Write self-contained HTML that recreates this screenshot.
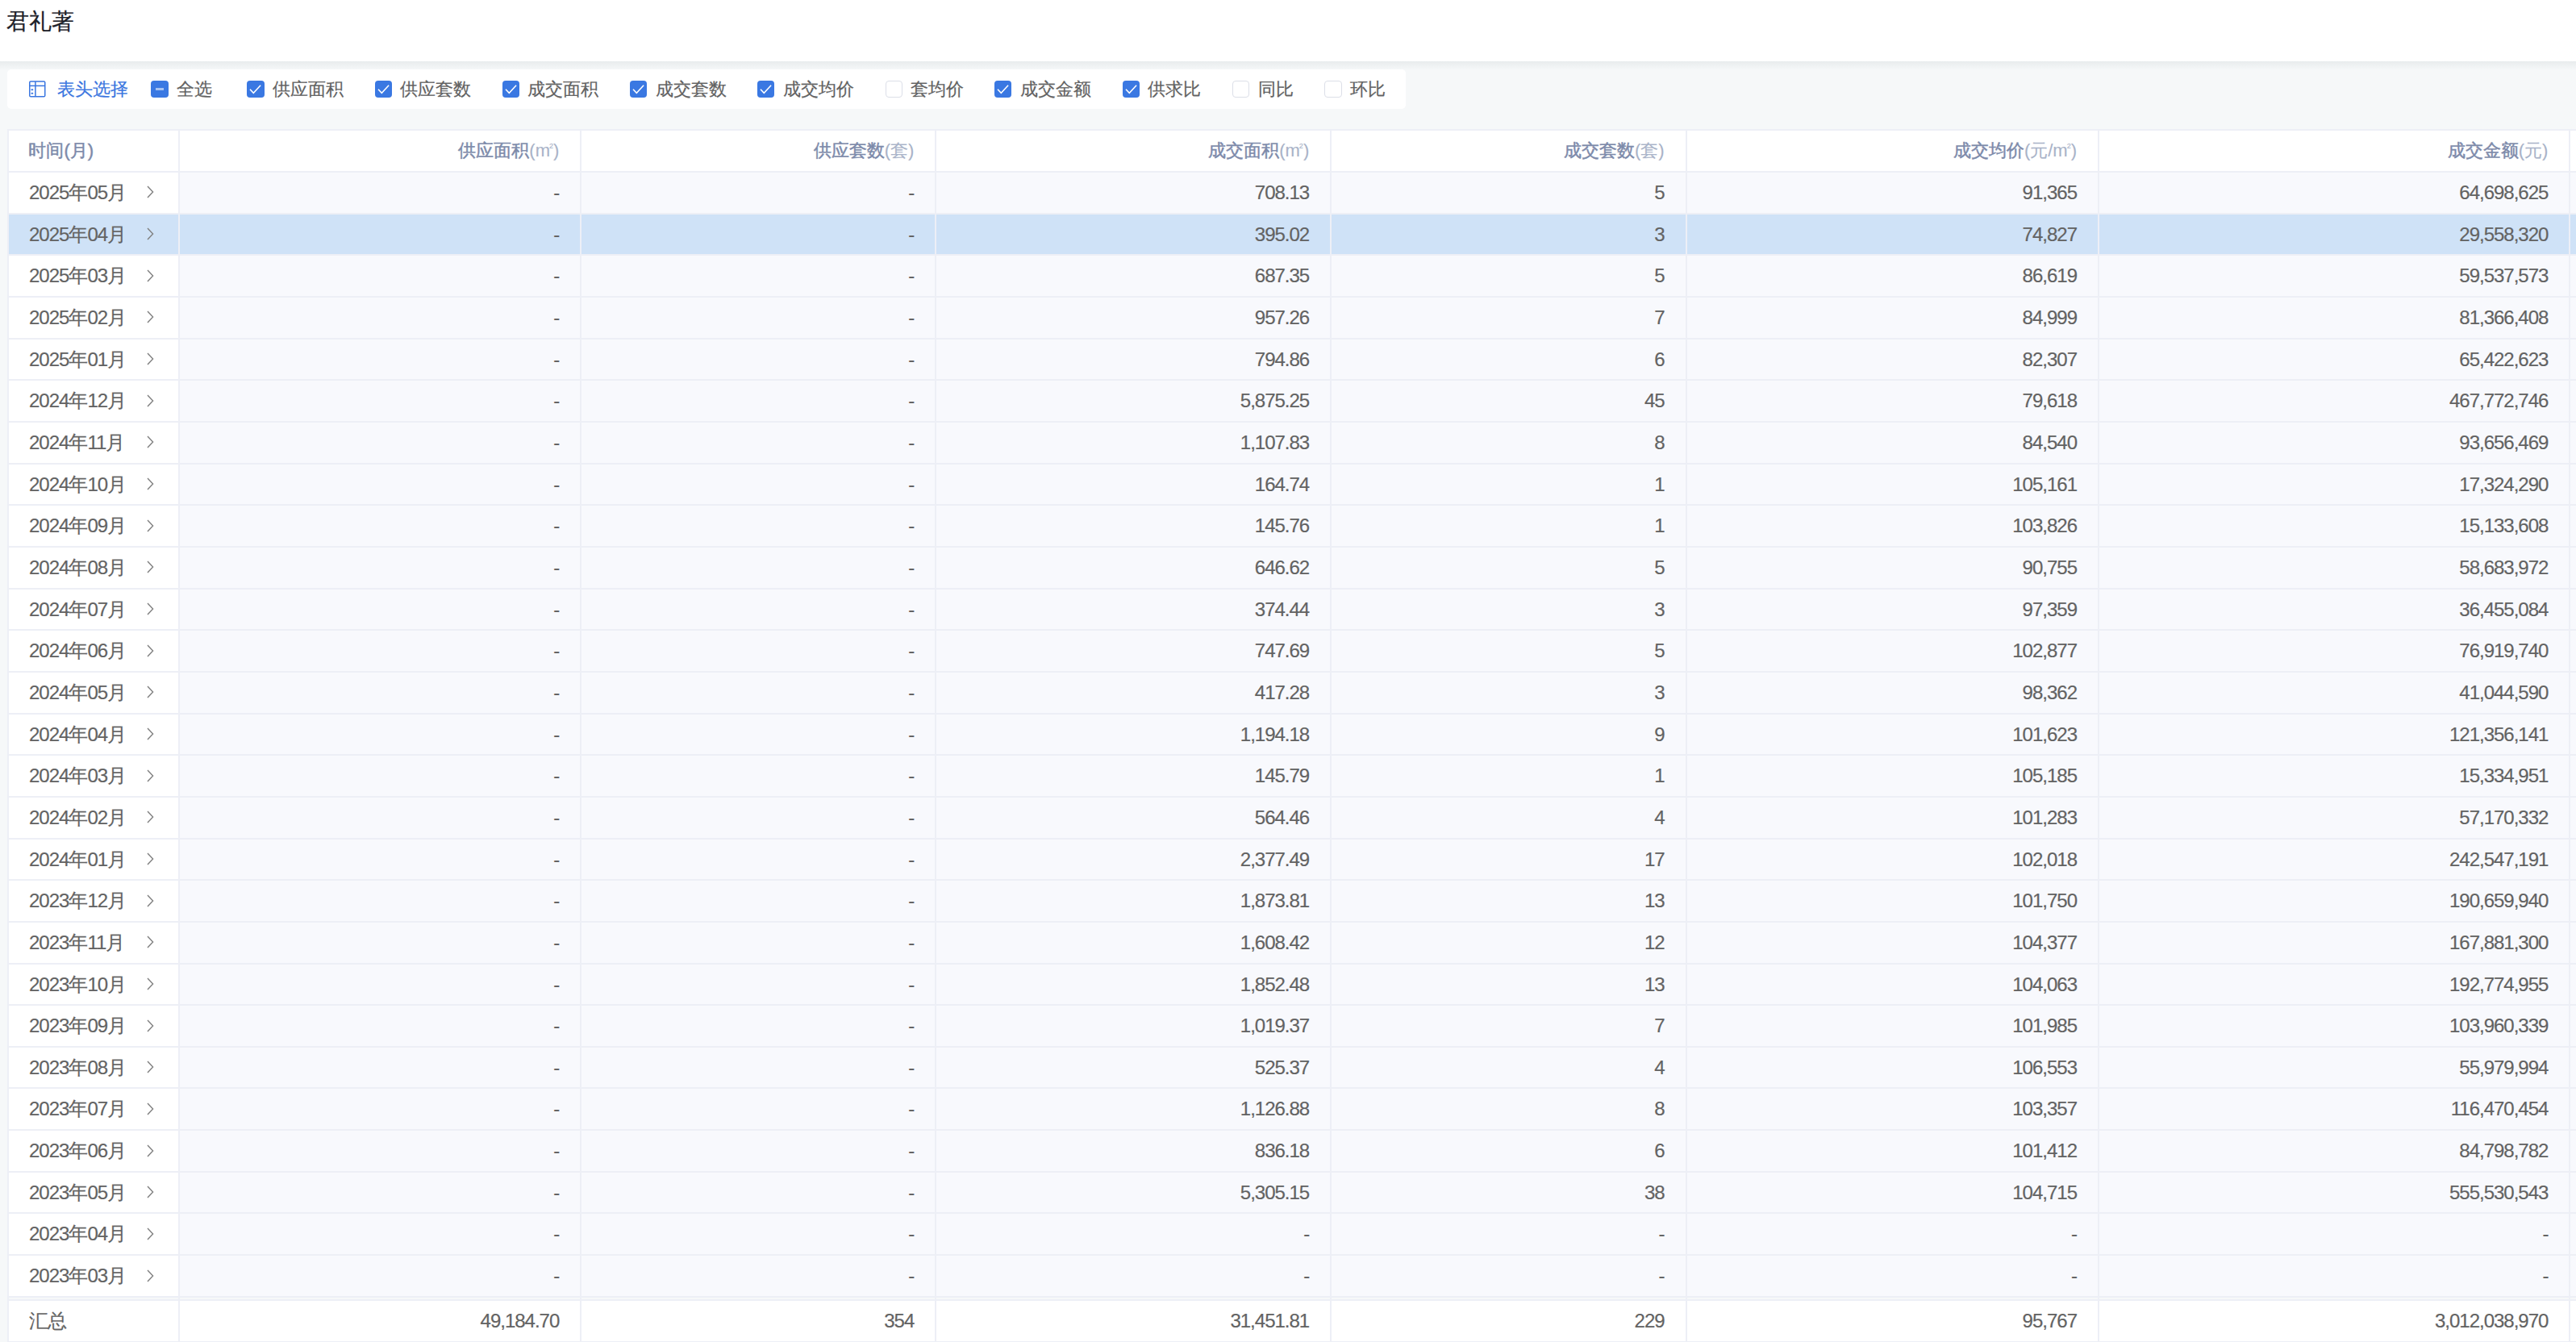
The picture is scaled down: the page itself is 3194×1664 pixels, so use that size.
<!DOCTYPE html><html><head><meta charset="utf-8"><style>
*{box-sizing:border-box;margin:0;padding:0}
html,body{width:3194px;height:1664px;overflow:hidden;background:#f6f8f9;font-family:"Liberation Sans",sans-serif}
.a{position:absolute}
.hd{left:0;top:0;width:3194px;height:75.5px;background:#fff}
.shd{left:0;top:75.5px;width:3194px;height:11px;background:linear-gradient(#e8eced,#f6f8f9)}
.ttl{left:8px;top:0;height:53px;line-height:53px;font-size:28px;color:#1d2129;white-space:nowrap}
.card{left:8.5px;top:85.5px;width:1734.5px;height:49.5px;background:#fff;border-radius:5px}
.tb{top:85.5px;height:49.5px;line-height:49.5px;font-size:22px;color:#626262;white-space:nowrap}
.cb{top:99.8px;width:21.4px;height:21.2px;border-radius:4px;background:#3a78e2}
.cbu{background:#fff;border:1.5px solid #dcdfe8}
.grid{left:0;top:0;width:3194px;height:1664px}
.ln{background:#edeff6}
.tx{white-space:nowrap;font-size:24px;letter-spacing:-1px;color:#636363;line-height:51.66px;height:51.66px}
.th{white-space:nowrap;font-size:22px;color:#7d8aaa;line-height:51.66px;height:51.66px}
.th span{color:#a9b3c8}
.th sup{font-size:9px;vertical-align:0;position:relative;top:-10px;margin-left:-1px}
.tx,.tb,.ttl{-webkit-text-stroke:0.2px currentColor}
.th{-webkit-text-stroke:0.45px currentColor}
.th span{-webkit-text-stroke:0.15px currentColor}
</style></head><body><div class="a hd"></div><div class="a shd"></div>
<div class="a ttl">君礼著</div>
<div class="a card"></div>
<svg class="a" style="left:35px;top:99px" width="23" height="23" viewBox="0 0 23 23"><g fill="none" stroke="#3a76e0" stroke-width="1.5"><rect x="1.75" y="2.05" width="19" height="18.7" rx="1.3"/><line x1="1.75" y1="7.4" x2="20.75" y2="7.4"/><line x1="8.9" y1="2.05" x2="8.9" y2="20.75"/></g><ellipse cx="4.85" cy="12.3" rx="1.5" ry="1" fill="#3a76e0"/><ellipse cx="4.85" cy="16.8" rx="1.5" ry="1" fill="#3a76e0"/></svg>
<div class="a tb" style="left:71px;color:#3a76e0">表头选择</div>
<div class="a cb" style="left:187.3px"><div style="position:absolute;left:6.1px;top:9px;width:9.3px;height:3px;background:rgba(255,255,255,.55)"></div></div>
<div class="a tb" style="left:219.1px">全选</div>
<div class="a cb" style="left:306.2px"><svg width="21" height="21" viewBox="0 0 21 21" style="position:absolute;left:0;top:0"><polyline points="4.5,11.3 8.3,15.3 16.6,6.3" fill="none" stroke="#fff" stroke-width="1.5" stroke-linecap="square" stroke-linejoin="miter"/></svg></div>
<div class="a tb" style="left:338px">供应面积</div>
<div class="a cb" style="left:464.6px"><svg width="21" height="21" viewBox="0 0 21 21" style="position:absolute;left:0;top:0"><polyline points="4.5,11.3 8.3,15.3 16.6,6.3" fill="none" stroke="#fff" stroke-width="1.5" stroke-linecap="square" stroke-linejoin="miter"/></svg></div>
<div class="a tb" style="left:496.4px">供应套数</div>
<div class="a cb" style="left:622.6px"><svg width="21" height="21" viewBox="0 0 21 21" style="position:absolute;left:0;top:0"><polyline points="4.5,11.3 8.3,15.3 16.6,6.3" fill="none" stroke="#fff" stroke-width="1.5" stroke-linecap="square" stroke-linejoin="miter"/></svg></div>
<div class="a tb" style="left:654.4px">成交面积</div>
<div class="a cb" style="left:780.7px"><svg width="21" height="21" viewBox="0 0 21 21" style="position:absolute;left:0;top:0"><polyline points="4.5,11.3 8.3,15.3 16.6,6.3" fill="none" stroke="#fff" stroke-width="1.5" stroke-linecap="square" stroke-linejoin="miter"/></svg></div>
<div class="a tb" style="left:812.5px">成交套数</div>
<div class="a cb" style="left:938.9px"><svg width="21" height="21" viewBox="0 0 21 21" style="position:absolute;left:0;top:0"><polyline points="4.5,11.3 8.3,15.3 16.6,6.3" fill="none" stroke="#fff" stroke-width="1.5" stroke-linecap="square" stroke-linejoin="miter"/></svg></div>
<div class="a tb" style="left:970.7px">成交均价</div>
<div class="a cb cbu" style="left:1097.6px"></div>
<div class="a tb" style="left:1129.4px">套均价</div>
<div class="a cb" style="left:1233px"><svg width="21" height="21" viewBox="0 0 21 21" style="position:absolute;left:0;top:0"><polyline points="4.5,11.3 8.3,15.3 16.6,6.3" fill="none" stroke="#fff" stroke-width="1.5" stroke-linecap="square" stroke-linejoin="miter"/></svg></div>
<div class="a tb" style="left:1264.8px">成交金额</div>
<div class="a cb" style="left:1391.5px"><svg width="21" height="21" viewBox="0 0 21 21" style="position:absolute;left:0;top:0"><polyline points="4.5,11.3 8.3,15.3 16.6,6.3" fill="none" stroke="#fff" stroke-width="1.5" stroke-linecap="square" stroke-linejoin="miter"/></svg></div>
<div class="a tb" style="left:1423.3px">供求比</div>
<div class="a cb cbu" style="left:1527.8px"></div>
<div class="a tb" style="left:1559.6px">同比</div>
<div class="a cb cbu" style="left:1642.4px"></div>
<div class="a tb" style="left:1674.2px">环比</div>
<div class="a" style="left:9.6px;top:161.3px;width:3184.4px;height:51.66px;background:#fff"></div>
<div class="a" style="left:9.6px;top:212.96px;width:3184.4px;height:51.66px;background:#f8f9fd"></div>
<div class="a" style="left:9.6px;top:212.96px;width:212.8px;height:51.66px;background:#fff"></div>
<div class="a" style="left:9.6px;top:264.62px;width:3184.4px;height:51.66px;background:#cfe2f7"></div>
<div class="a" style="left:9.6px;top:316.28px;width:3184.4px;height:51.66px;background:#f8f9fd"></div>
<div class="a" style="left:9.6px;top:316.28px;width:212.8px;height:51.66px;background:#fff"></div>
<div class="a" style="left:9.6px;top:367.94px;width:3184.4px;height:51.66px;background:#f8f9fd"></div>
<div class="a" style="left:9.6px;top:367.94px;width:212.8px;height:51.66px;background:#fff"></div>
<div class="a" style="left:9.6px;top:419.6px;width:3184.4px;height:51.66px;background:#f8f9fd"></div>
<div class="a" style="left:9.6px;top:419.6px;width:212.8px;height:51.66px;background:#fff"></div>
<div class="a" style="left:9.6px;top:471.26px;width:3184.4px;height:51.66px;background:#f8f9fd"></div>
<div class="a" style="left:9.6px;top:471.26px;width:212.8px;height:51.66px;background:#fff"></div>
<div class="a" style="left:9.6px;top:522.92px;width:3184.4px;height:51.66px;background:#f8f9fd"></div>
<div class="a" style="left:9.6px;top:522.92px;width:212.8px;height:51.66px;background:#fff"></div>
<div class="a" style="left:9.6px;top:574.58px;width:3184.4px;height:51.66px;background:#f8f9fd"></div>
<div class="a" style="left:9.6px;top:574.58px;width:212.8px;height:51.66px;background:#fff"></div>
<div class="a" style="left:9.6px;top:626.24px;width:3184.4px;height:51.66px;background:#f8f9fd"></div>
<div class="a" style="left:9.6px;top:626.24px;width:212.8px;height:51.66px;background:#fff"></div>
<div class="a" style="left:9.6px;top:677.9px;width:3184.4px;height:51.66px;background:#f8f9fd"></div>
<div class="a" style="left:9.6px;top:677.9px;width:212.8px;height:51.66px;background:#fff"></div>
<div class="a" style="left:9.6px;top:729.56px;width:3184.4px;height:51.66px;background:#f8f9fd"></div>
<div class="a" style="left:9.6px;top:729.56px;width:212.8px;height:51.66px;background:#fff"></div>
<div class="a" style="left:9.6px;top:781.22px;width:3184.4px;height:51.66px;background:#f8f9fd"></div>
<div class="a" style="left:9.6px;top:781.22px;width:212.8px;height:51.66px;background:#fff"></div>
<div class="a" style="left:9.6px;top:832.88px;width:3184.4px;height:51.66px;background:#f8f9fd"></div>
<div class="a" style="left:9.6px;top:832.88px;width:212.8px;height:51.66px;background:#fff"></div>
<div class="a" style="left:9.6px;top:884.54px;width:3184.4px;height:51.66px;background:#f8f9fd"></div>
<div class="a" style="left:9.6px;top:884.54px;width:212.8px;height:51.66px;background:#fff"></div>
<div class="a" style="left:9.6px;top:936.2px;width:3184.4px;height:51.66px;background:#f8f9fd"></div>
<div class="a" style="left:9.6px;top:936.2px;width:212.8px;height:51.66px;background:#fff"></div>
<div class="a" style="left:9.6px;top:987.86px;width:3184.4px;height:51.66px;background:#f8f9fd"></div>
<div class="a" style="left:9.6px;top:987.86px;width:212.8px;height:51.66px;background:#fff"></div>
<div class="a" style="left:9.6px;top:1039.52px;width:3184.4px;height:51.66px;background:#f8f9fd"></div>
<div class="a" style="left:9.6px;top:1039.52px;width:212.8px;height:51.66px;background:#fff"></div>
<div class="a" style="left:9.6px;top:1091.18px;width:3184.4px;height:51.66px;background:#f8f9fd"></div>
<div class="a" style="left:9.6px;top:1091.18px;width:212.8px;height:51.66px;background:#fff"></div>
<div class="a" style="left:9.6px;top:1142.84px;width:3184.4px;height:51.66px;background:#f8f9fd"></div>
<div class="a" style="left:9.6px;top:1142.84px;width:212.8px;height:51.66px;background:#fff"></div>
<div class="a" style="left:9.6px;top:1194.5px;width:3184.4px;height:51.66px;background:#f8f9fd"></div>
<div class="a" style="left:9.6px;top:1194.5px;width:212.8px;height:51.66px;background:#fff"></div>
<div class="a" style="left:9.6px;top:1246.16px;width:3184.4px;height:51.66px;background:#f8f9fd"></div>
<div class="a" style="left:9.6px;top:1246.16px;width:212.8px;height:51.66px;background:#fff"></div>
<div class="a" style="left:9.6px;top:1297.82px;width:3184.4px;height:51.66px;background:#f8f9fd"></div>
<div class="a" style="left:9.6px;top:1297.82px;width:212.8px;height:51.66px;background:#fff"></div>
<div class="a" style="left:9.6px;top:1349.48px;width:3184.4px;height:51.66px;background:#f8f9fd"></div>
<div class="a" style="left:9.6px;top:1349.48px;width:212.8px;height:51.66px;background:#fff"></div>
<div class="a" style="left:9.6px;top:1401.14px;width:3184.4px;height:51.66px;background:#f8f9fd"></div>
<div class="a" style="left:9.6px;top:1401.14px;width:212.8px;height:51.66px;background:#fff"></div>
<div class="a" style="left:9.6px;top:1452.8px;width:3184.4px;height:51.66px;background:#f8f9fd"></div>
<div class="a" style="left:9.6px;top:1452.8px;width:212.8px;height:51.66px;background:#fff"></div>
<div class="a" style="left:9.6px;top:1504.46px;width:3184.4px;height:51.66px;background:#f8f9fd"></div>
<div class="a" style="left:9.6px;top:1504.46px;width:212.8px;height:51.66px;background:#fff"></div>
<div class="a" style="left:9.6px;top:1556.12px;width:3184.4px;height:51.66px;background:#f8f9fd"></div>
<div class="a" style="left:9.6px;top:1556.12px;width:212.8px;height:51.66px;background:#fff"></div>
<div class="a" style="left:9.6px;top:1612.3px;width:3184.4px;height:51.7px;background:#fff"></div>
<div class="a ln" style="left:9.6px;top:160.3px;width:3184.4px;height:2px"></div>
<div class="a ln" style="left:9.6px;top:211.96px;width:3184.4px;height:2px"></div>
<div class="a ln" style="left:9.6px;top:263.62px;width:3184.4px;height:2px"></div>
<div class="a ln" style="left:9.6px;top:315.28px;width:3184.4px;height:2px"></div>
<div class="a ln" style="left:9.6px;top:366.94px;width:3184.4px;height:2px"></div>
<div class="a ln" style="left:9.6px;top:418.6px;width:3184.4px;height:2px"></div>
<div class="a ln" style="left:9.6px;top:470.26px;width:3184.4px;height:2px"></div>
<div class="a ln" style="left:9.6px;top:521.92px;width:3184.4px;height:2px"></div>
<div class="a ln" style="left:9.6px;top:573.58px;width:3184.4px;height:2px"></div>
<div class="a ln" style="left:9.6px;top:625.24px;width:3184.4px;height:2px"></div>
<div class="a ln" style="left:9.6px;top:676.9px;width:3184.4px;height:2px"></div>
<div class="a ln" style="left:9.6px;top:728.56px;width:3184.4px;height:2px"></div>
<div class="a ln" style="left:9.6px;top:780.22px;width:3184.4px;height:2px"></div>
<div class="a ln" style="left:9.6px;top:831.88px;width:3184.4px;height:2px"></div>
<div class="a ln" style="left:9.6px;top:883.54px;width:3184.4px;height:2px"></div>
<div class="a ln" style="left:9.6px;top:935.2px;width:3184.4px;height:2px"></div>
<div class="a ln" style="left:9.6px;top:986.86px;width:3184.4px;height:2px"></div>
<div class="a ln" style="left:9.6px;top:1038.52px;width:3184.4px;height:2px"></div>
<div class="a ln" style="left:9.6px;top:1090.18px;width:3184.4px;height:2px"></div>
<div class="a ln" style="left:9.6px;top:1141.84px;width:3184.4px;height:2px"></div>
<div class="a ln" style="left:9.6px;top:1193.5px;width:3184.4px;height:2px"></div>
<div class="a ln" style="left:9.6px;top:1245.16px;width:3184.4px;height:2px"></div>
<div class="a ln" style="left:9.6px;top:1296.82px;width:3184.4px;height:2px"></div>
<div class="a ln" style="left:9.6px;top:1348.48px;width:3184.4px;height:2px"></div>
<div class="a ln" style="left:9.6px;top:1400.14px;width:3184.4px;height:2px"></div>
<div class="a ln" style="left:9.6px;top:1451.8px;width:3184.4px;height:2px"></div>
<div class="a ln" style="left:9.6px;top:1503.46px;width:3184.4px;height:2px"></div>
<div class="a ln" style="left:9.6px;top:1555.12px;width:3184.4px;height:2px"></div>
<div class="a ln" style="left:9.6px;top:1606.78px;width:3184.4px;height:2px"></div>
<div class="a ln" style="left:9.6px;top:1611.3px;width:3184.4px;height:2px"></div>
<div class="a ln" style="left:9.6px;top:1663px;width:3184.4px;height:1px"></div>
<div class="a ln" style="left:8.6px;top:160.3px;width:2px;height:1503.7px"></div>
<div class="a ln" style="left:221.4px;top:160.3px;width:2px;height:1503.7px"></div>
<div class="a ln" style="left:719.3px;top:160.3px;width:2px;height:1503.7px"></div>
<div class="a ln" style="left:1159.3px;top:160.3px;width:2px;height:1503.7px"></div>
<div class="a ln" style="left:1649.2px;top:160.3px;width:2px;height:1503.7px"></div>
<div class="a ln" style="left:2089.6px;top:160.3px;width:2px;height:1503.7px"></div>
<div class="a ln" style="left:2601px;top:160.3px;width:2px;height:1503.7px"></div>
<div class="a ln" style="left:3185.4px;top:160.3px;width:2px;height:1503.7px"></div>
<div class="a th" style="left:35.4px;top:161.3px">时间(月)</div>
<div class="a th" style="right:2500.7px;top:161.3px">供应面积<span>(m<sup>2</sup>)</span></div>
<div class="a th" style="right:2060.7px;top:161.3px">供应套数<span>(套)</span></div>
<div class="a th" style="right:1570.8px;top:161.3px">成交面积<span>(m<sup>2</sup>)</span></div>
<div class="a th" style="right:1130.4px;top:161.3px">成交套数<span>(套)</span></div>
<div class="a th" style="right:619px;top:161.3px">成交均价<span>(元/m<sup>2</sup>)</span></div>
<div class="a th" style="right:34.6px;top:161.3px">成交金额<span>(元)</span></div>
<div class="a tx" style="left:36px;top:212.96px">2025年05月</div>
<svg class="a" style="left:180px;top:227.46px" width="12" height="22" viewBox="0 0 12 22"><polyline points="3,4 9.6,11 3,18.1" fill="none" stroke="#808080" stroke-width="1.4"/></svg>
<div class="a tx" style="right:2500.7px;top:212.96px">-</div>
<div class="a tx" style="right:2060.7px;top:212.96px">-</div>
<div class="a tx" style="right:1570.8px;top:212.96px">708.13</div>
<div class="a tx" style="right:1130.4px;top:212.96px">5</div>
<div class="a tx" style="right:619px;top:212.96px">91,365</div>
<div class="a tx" style="right:34.6px;top:212.96px">64,698,625</div>
<div class="a tx" style="left:36px;top:264.62px">2025年04月</div>
<svg class="a" style="left:180px;top:279.12px" width="12" height="22" viewBox="0 0 12 22"><polyline points="3,4 9.6,11 3,18.1" fill="none" stroke="#808080" stroke-width="1.4"/></svg>
<div class="a tx" style="right:2500.7px;top:264.62px">-</div>
<div class="a tx" style="right:2060.7px;top:264.62px">-</div>
<div class="a tx" style="right:1570.8px;top:264.62px">395.02</div>
<div class="a tx" style="right:1130.4px;top:264.62px">3</div>
<div class="a tx" style="right:619px;top:264.62px">74,827</div>
<div class="a tx" style="right:34.6px;top:264.62px">29,558,320</div>
<div class="a tx" style="left:36px;top:316.28px">2025年03月</div>
<svg class="a" style="left:180px;top:330.78px" width="12" height="22" viewBox="0 0 12 22"><polyline points="3,4 9.6,11 3,18.1" fill="none" stroke="#808080" stroke-width="1.4"/></svg>
<div class="a tx" style="right:2500.7px;top:316.28px">-</div>
<div class="a tx" style="right:2060.7px;top:316.28px">-</div>
<div class="a tx" style="right:1570.8px;top:316.28px">687.35</div>
<div class="a tx" style="right:1130.4px;top:316.28px">5</div>
<div class="a tx" style="right:619px;top:316.28px">86,619</div>
<div class="a tx" style="right:34.6px;top:316.28px">59,537,573</div>
<div class="a tx" style="left:36px;top:367.94px">2025年02月</div>
<svg class="a" style="left:180px;top:382.44px" width="12" height="22" viewBox="0 0 12 22"><polyline points="3,4 9.6,11 3,18.1" fill="none" stroke="#808080" stroke-width="1.4"/></svg>
<div class="a tx" style="right:2500.7px;top:367.94px">-</div>
<div class="a tx" style="right:2060.7px;top:367.94px">-</div>
<div class="a tx" style="right:1570.8px;top:367.94px">957.26</div>
<div class="a tx" style="right:1130.4px;top:367.94px">7</div>
<div class="a tx" style="right:619px;top:367.94px">84,999</div>
<div class="a tx" style="right:34.6px;top:367.94px">81,366,408</div>
<div class="a tx" style="left:36px;top:419.6px">2025年01月</div>
<svg class="a" style="left:180px;top:434.1px" width="12" height="22" viewBox="0 0 12 22"><polyline points="3,4 9.6,11 3,18.1" fill="none" stroke="#808080" stroke-width="1.4"/></svg>
<div class="a tx" style="right:2500.7px;top:419.6px">-</div>
<div class="a tx" style="right:2060.7px;top:419.6px">-</div>
<div class="a tx" style="right:1570.8px;top:419.6px">794.86</div>
<div class="a tx" style="right:1130.4px;top:419.6px">6</div>
<div class="a tx" style="right:619px;top:419.6px">82,307</div>
<div class="a tx" style="right:34.6px;top:419.6px">65,422,623</div>
<div class="a tx" style="left:36px;top:471.26px">2024年12月</div>
<svg class="a" style="left:180px;top:485.76px" width="12" height="22" viewBox="0 0 12 22"><polyline points="3,4 9.6,11 3,18.1" fill="none" stroke="#808080" stroke-width="1.4"/></svg>
<div class="a tx" style="right:2500.7px;top:471.26px">-</div>
<div class="a tx" style="right:2060.7px;top:471.26px">-</div>
<div class="a tx" style="right:1570.8px;top:471.26px">5,875.25</div>
<div class="a tx" style="right:1130.4px;top:471.26px">45</div>
<div class="a tx" style="right:619px;top:471.26px">79,618</div>
<div class="a tx" style="right:34.6px;top:471.26px">467,772,746</div>
<div class="a tx" style="left:36px;top:522.92px">2024年11月</div>
<svg class="a" style="left:180px;top:537.42px" width="12" height="22" viewBox="0 0 12 22"><polyline points="3,4 9.6,11 3,18.1" fill="none" stroke="#808080" stroke-width="1.4"/></svg>
<div class="a tx" style="right:2500.7px;top:522.92px">-</div>
<div class="a tx" style="right:2060.7px;top:522.92px">-</div>
<div class="a tx" style="right:1570.8px;top:522.92px">1,107.83</div>
<div class="a tx" style="right:1130.4px;top:522.92px">8</div>
<div class="a tx" style="right:619px;top:522.92px">84,540</div>
<div class="a tx" style="right:34.6px;top:522.92px">93,656,469</div>
<div class="a tx" style="left:36px;top:574.58px">2024年10月</div>
<svg class="a" style="left:180px;top:589.08px" width="12" height="22" viewBox="0 0 12 22"><polyline points="3,4 9.6,11 3,18.1" fill="none" stroke="#808080" stroke-width="1.4"/></svg>
<div class="a tx" style="right:2500.7px;top:574.58px">-</div>
<div class="a tx" style="right:2060.7px;top:574.58px">-</div>
<div class="a tx" style="right:1570.8px;top:574.58px">164.74</div>
<div class="a tx" style="right:1130.4px;top:574.58px">1</div>
<div class="a tx" style="right:619px;top:574.58px">105,161</div>
<div class="a tx" style="right:34.6px;top:574.58px">17,324,290</div>
<div class="a tx" style="left:36px;top:626.24px">2024年09月</div>
<svg class="a" style="left:180px;top:640.74px" width="12" height="22" viewBox="0 0 12 22"><polyline points="3,4 9.6,11 3,18.1" fill="none" stroke="#808080" stroke-width="1.4"/></svg>
<div class="a tx" style="right:2500.7px;top:626.24px">-</div>
<div class="a tx" style="right:2060.7px;top:626.24px">-</div>
<div class="a tx" style="right:1570.8px;top:626.24px">145.76</div>
<div class="a tx" style="right:1130.4px;top:626.24px">1</div>
<div class="a tx" style="right:619px;top:626.24px">103,826</div>
<div class="a tx" style="right:34.6px;top:626.24px">15,133,608</div>
<div class="a tx" style="left:36px;top:677.9px">2024年08月</div>
<svg class="a" style="left:180px;top:692.4px" width="12" height="22" viewBox="0 0 12 22"><polyline points="3,4 9.6,11 3,18.1" fill="none" stroke="#808080" stroke-width="1.4"/></svg>
<div class="a tx" style="right:2500.7px;top:677.9px">-</div>
<div class="a tx" style="right:2060.7px;top:677.9px">-</div>
<div class="a tx" style="right:1570.8px;top:677.9px">646.62</div>
<div class="a tx" style="right:1130.4px;top:677.9px">5</div>
<div class="a tx" style="right:619px;top:677.9px">90,755</div>
<div class="a tx" style="right:34.6px;top:677.9px">58,683,972</div>
<div class="a tx" style="left:36px;top:729.56px">2024年07月</div>
<svg class="a" style="left:180px;top:744.06px" width="12" height="22" viewBox="0 0 12 22"><polyline points="3,4 9.6,11 3,18.1" fill="none" stroke="#808080" stroke-width="1.4"/></svg>
<div class="a tx" style="right:2500.7px;top:729.56px">-</div>
<div class="a tx" style="right:2060.7px;top:729.56px">-</div>
<div class="a tx" style="right:1570.8px;top:729.56px">374.44</div>
<div class="a tx" style="right:1130.4px;top:729.56px">3</div>
<div class="a tx" style="right:619px;top:729.56px">97,359</div>
<div class="a tx" style="right:34.6px;top:729.56px">36,455,084</div>
<div class="a tx" style="left:36px;top:781.22px">2024年06月</div>
<svg class="a" style="left:180px;top:795.72px" width="12" height="22" viewBox="0 0 12 22"><polyline points="3,4 9.6,11 3,18.1" fill="none" stroke="#808080" stroke-width="1.4"/></svg>
<div class="a tx" style="right:2500.7px;top:781.22px">-</div>
<div class="a tx" style="right:2060.7px;top:781.22px">-</div>
<div class="a tx" style="right:1570.8px;top:781.22px">747.69</div>
<div class="a tx" style="right:1130.4px;top:781.22px">5</div>
<div class="a tx" style="right:619px;top:781.22px">102,877</div>
<div class="a tx" style="right:34.6px;top:781.22px">76,919,740</div>
<div class="a tx" style="left:36px;top:832.88px">2024年05月</div>
<svg class="a" style="left:180px;top:847.38px" width="12" height="22" viewBox="0 0 12 22"><polyline points="3,4 9.6,11 3,18.1" fill="none" stroke="#808080" stroke-width="1.4"/></svg>
<div class="a tx" style="right:2500.7px;top:832.88px">-</div>
<div class="a tx" style="right:2060.7px;top:832.88px">-</div>
<div class="a tx" style="right:1570.8px;top:832.88px">417.28</div>
<div class="a tx" style="right:1130.4px;top:832.88px">3</div>
<div class="a tx" style="right:619px;top:832.88px">98,362</div>
<div class="a tx" style="right:34.6px;top:832.88px">41,044,590</div>
<div class="a tx" style="left:36px;top:884.54px">2024年04月</div>
<svg class="a" style="left:180px;top:899.04px" width="12" height="22" viewBox="0 0 12 22"><polyline points="3,4 9.6,11 3,18.1" fill="none" stroke="#808080" stroke-width="1.4"/></svg>
<div class="a tx" style="right:2500.7px;top:884.54px">-</div>
<div class="a tx" style="right:2060.7px;top:884.54px">-</div>
<div class="a tx" style="right:1570.8px;top:884.54px">1,194.18</div>
<div class="a tx" style="right:1130.4px;top:884.54px">9</div>
<div class="a tx" style="right:619px;top:884.54px">101,623</div>
<div class="a tx" style="right:34.6px;top:884.54px">121,356,141</div>
<div class="a tx" style="left:36px;top:936.2px">2024年03月</div>
<svg class="a" style="left:180px;top:950.7px" width="12" height="22" viewBox="0 0 12 22"><polyline points="3,4 9.6,11 3,18.1" fill="none" stroke="#808080" stroke-width="1.4"/></svg>
<div class="a tx" style="right:2500.7px;top:936.2px">-</div>
<div class="a tx" style="right:2060.7px;top:936.2px">-</div>
<div class="a tx" style="right:1570.8px;top:936.2px">145.79</div>
<div class="a tx" style="right:1130.4px;top:936.2px">1</div>
<div class="a tx" style="right:619px;top:936.2px">105,185</div>
<div class="a tx" style="right:34.6px;top:936.2px">15,334,951</div>
<div class="a tx" style="left:36px;top:987.86px">2024年02月</div>
<svg class="a" style="left:180px;top:1002.36px" width="12" height="22" viewBox="0 0 12 22"><polyline points="3,4 9.6,11 3,18.1" fill="none" stroke="#808080" stroke-width="1.4"/></svg>
<div class="a tx" style="right:2500.7px;top:987.86px">-</div>
<div class="a tx" style="right:2060.7px;top:987.86px">-</div>
<div class="a tx" style="right:1570.8px;top:987.86px">564.46</div>
<div class="a tx" style="right:1130.4px;top:987.86px">4</div>
<div class="a tx" style="right:619px;top:987.86px">101,283</div>
<div class="a tx" style="right:34.6px;top:987.86px">57,170,332</div>
<div class="a tx" style="left:36px;top:1039.52px">2024年01月</div>
<svg class="a" style="left:180px;top:1054.02px" width="12" height="22" viewBox="0 0 12 22"><polyline points="3,4 9.6,11 3,18.1" fill="none" stroke="#808080" stroke-width="1.4"/></svg>
<div class="a tx" style="right:2500.7px;top:1039.52px">-</div>
<div class="a tx" style="right:2060.7px;top:1039.52px">-</div>
<div class="a tx" style="right:1570.8px;top:1039.52px">2,377.49</div>
<div class="a tx" style="right:1130.4px;top:1039.52px">17</div>
<div class="a tx" style="right:619px;top:1039.52px">102,018</div>
<div class="a tx" style="right:34.6px;top:1039.52px">242,547,191</div>
<div class="a tx" style="left:36px;top:1091.18px">2023年12月</div>
<svg class="a" style="left:180px;top:1105.68px" width="12" height="22" viewBox="0 0 12 22"><polyline points="3,4 9.6,11 3,18.1" fill="none" stroke="#808080" stroke-width="1.4"/></svg>
<div class="a tx" style="right:2500.7px;top:1091.18px">-</div>
<div class="a tx" style="right:2060.7px;top:1091.18px">-</div>
<div class="a tx" style="right:1570.8px;top:1091.18px">1,873.81</div>
<div class="a tx" style="right:1130.4px;top:1091.18px">13</div>
<div class="a tx" style="right:619px;top:1091.18px">101,750</div>
<div class="a tx" style="right:34.6px;top:1091.18px">190,659,940</div>
<div class="a tx" style="left:36px;top:1142.84px">2023年11月</div>
<svg class="a" style="left:180px;top:1157.34px" width="12" height="22" viewBox="0 0 12 22"><polyline points="3,4 9.6,11 3,18.1" fill="none" stroke="#808080" stroke-width="1.4"/></svg>
<div class="a tx" style="right:2500.7px;top:1142.84px">-</div>
<div class="a tx" style="right:2060.7px;top:1142.84px">-</div>
<div class="a tx" style="right:1570.8px;top:1142.84px">1,608.42</div>
<div class="a tx" style="right:1130.4px;top:1142.84px">12</div>
<div class="a tx" style="right:619px;top:1142.84px">104,377</div>
<div class="a tx" style="right:34.6px;top:1142.84px">167,881,300</div>
<div class="a tx" style="left:36px;top:1194.5px">2023年10月</div>
<svg class="a" style="left:180px;top:1209px" width="12" height="22" viewBox="0 0 12 22"><polyline points="3,4 9.6,11 3,18.1" fill="none" stroke="#808080" stroke-width="1.4"/></svg>
<div class="a tx" style="right:2500.7px;top:1194.5px">-</div>
<div class="a tx" style="right:2060.7px;top:1194.5px">-</div>
<div class="a tx" style="right:1570.8px;top:1194.5px">1,852.48</div>
<div class="a tx" style="right:1130.4px;top:1194.5px">13</div>
<div class="a tx" style="right:619px;top:1194.5px">104,063</div>
<div class="a tx" style="right:34.6px;top:1194.5px">192,774,955</div>
<div class="a tx" style="left:36px;top:1246.16px">2023年09月</div>
<svg class="a" style="left:180px;top:1260.66px" width="12" height="22" viewBox="0 0 12 22"><polyline points="3,4 9.6,11 3,18.1" fill="none" stroke="#808080" stroke-width="1.4"/></svg>
<div class="a tx" style="right:2500.7px;top:1246.16px">-</div>
<div class="a tx" style="right:2060.7px;top:1246.16px">-</div>
<div class="a tx" style="right:1570.8px;top:1246.16px">1,019.37</div>
<div class="a tx" style="right:1130.4px;top:1246.16px">7</div>
<div class="a tx" style="right:619px;top:1246.16px">101,985</div>
<div class="a tx" style="right:34.6px;top:1246.16px">103,960,339</div>
<div class="a tx" style="left:36px;top:1297.82px">2023年08月</div>
<svg class="a" style="left:180px;top:1312.32px" width="12" height="22" viewBox="0 0 12 22"><polyline points="3,4 9.6,11 3,18.1" fill="none" stroke="#808080" stroke-width="1.4"/></svg>
<div class="a tx" style="right:2500.7px;top:1297.82px">-</div>
<div class="a tx" style="right:2060.7px;top:1297.82px">-</div>
<div class="a tx" style="right:1570.8px;top:1297.82px">525.37</div>
<div class="a tx" style="right:1130.4px;top:1297.82px">4</div>
<div class="a tx" style="right:619px;top:1297.82px">106,553</div>
<div class="a tx" style="right:34.6px;top:1297.82px">55,979,994</div>
<div class="a tx" style="left:36px;top:1349.48px">2023年07月</div>
<svg class="a" style="left:180px;top:1363.98px" width="12" height="22" viewBox="0 0 12 22"><polyline points="3,4 9.6,11 3,18.1" fill="none" stroke="#808080" stroke-width="1.4"/></svg>
<div class="a tx" style="right:2500.7px;top:1349.48px">-</div>
<div class="a tx" style="right:2060.7px;top:1349.48px">-</div>
<div class="a tx" style="right:1570.8px;top:1349.48px">1,126.88</div>
<div class="a tx" style="right:1130.4px;top:1349.48px">8</div>
<div class="a tx" style="right:619px;top:1349.48px">103,357</div>
<div class="a tx" style="right:34.6px;top:1349.48px">116,470,454</div>
<div class="a tx" style="left:36px;top:1401.14px">2023年06月</div>
<svg class="a" style="left:180px;top:1415.64px" width="12" height="22" viewBox="0 0 12 22"><polyline points="3,4 9.6,11 3,18.1" fill="none" stroke="#808080" stroke-width="1.4"/></svg>
<div class="a tx" style="right:2500.7px;top:1401.14px">-</div>
<div class="a tx" style="right:2060.7px;top:1401.14px">-</div>
<div class="a tx" style="right:1570.8px;top:1401.14px">836.18</div>
<div class="a tx" style="right:1130.4px;top:1401.14px">6</div>
<div class="a tx" style="right:619px;top:1401.14px">101,412</div>
<div class="a tx" style="right:34.6px;top:1401.14px">84,798,782</div>
<div class="a tx" style="left:36px;top:1452.8px">2023年05月</div>
<svg class="a" style="left:180px;top:1467.3px" width="12" height="22" viewBox="0 0 12 22"><polyline points="3,4 9.6,11 3,18.1" fill="none" stroke="#808080" stroke-width="1.4"/></svg>
<div class="a tx" style="right:2500.7px;top:1452.8px">-</div>
<div class="a tx" style="right:2060.7px;top:1452.8px">-</div>
<div class="a tx" style="right:1570.8px;top:1452.8px">5,305.15</div>
<div class="a tx" style="right:1130.4px;top:1452.8px">38</div>
<div class="a tx" style="right:619px;top:1452.8px">104,715</div>
<div class="a tx" style="right:34.6px;top:1452.8px">555,530,543</div>
<div class="a tx" style="left:36px;top:1504.46px">2023年04月</div>
<svg class="a" style="left:180px;top:1518.96px" width="12" height="22" viewBox="0 0 12 22"><polyline points="3,4 9.6,11 3,18.1" fill="none" stroke="#808080" stroke-width="1.4"/></svg>
<div class="a tx" style="right:2500.7px;top:1504.46px">-</div>
<div class="a tx" style="right:2060.7px;top:1504.46px">-</div>
<div class="a tx" style="right:1570.8px;top:1504.46px">-</div>
<div class="a tx" style="right:1130.4px;top:1504.46px">-</div>
<div class="a tx" style="right:619px;top:1504.46px">-</div>
<div class="a tx" style="right:34.6px;top:1504.46px">-</div>
<div class="a tx" style="left:36px;top:1556.12px">2023年03月</div>
<svg class="a" style="left:180px;top:1570.62px" width="12" height="22" viewBox="0 0 12 22"><polyline points="3,4 9.6,11 3,18.1" fill="none" stroke="#808080" stroke-width="1.4"/></svg>
<div class="a tx" style="right:2500.7px;top:1556.12px">-</div>
<div class="a tx" style="right:2060.7px;top:1556.12px">-</div>
<div class="a tx" style="right:1570.8px;top:1556.12px">-</div>
<div class="a tx" style="right:1130.4px;top:1556.12px">-</div>
<div class="a tx" style="right:619px;top:1556.12px">-</div>
<div class="a tx" style="right:34.6px;top:1556.12px">-</div>
<div class="a tx" style="left:36px;top:1612.3px">汇总</div>
<div class="a tx" style="right:2500.7px;top:1612.3px">49,184.70</div>
<div class="a tx" style="right:2060.7px;top:1612.3px">354</div>
<div class="a tx" style="right:1570.8px;top:1612.3px">31,451.81</div>
<div class="a tx" style="right:1130.4px;top:1612.3px">229</div>
<div class="a tx" style="right:619px;top:1612.3px">95,767</div>
<div class="a tx" style="right:34.6px;top:1612.3px">3,012,038,970</div></body></html>
